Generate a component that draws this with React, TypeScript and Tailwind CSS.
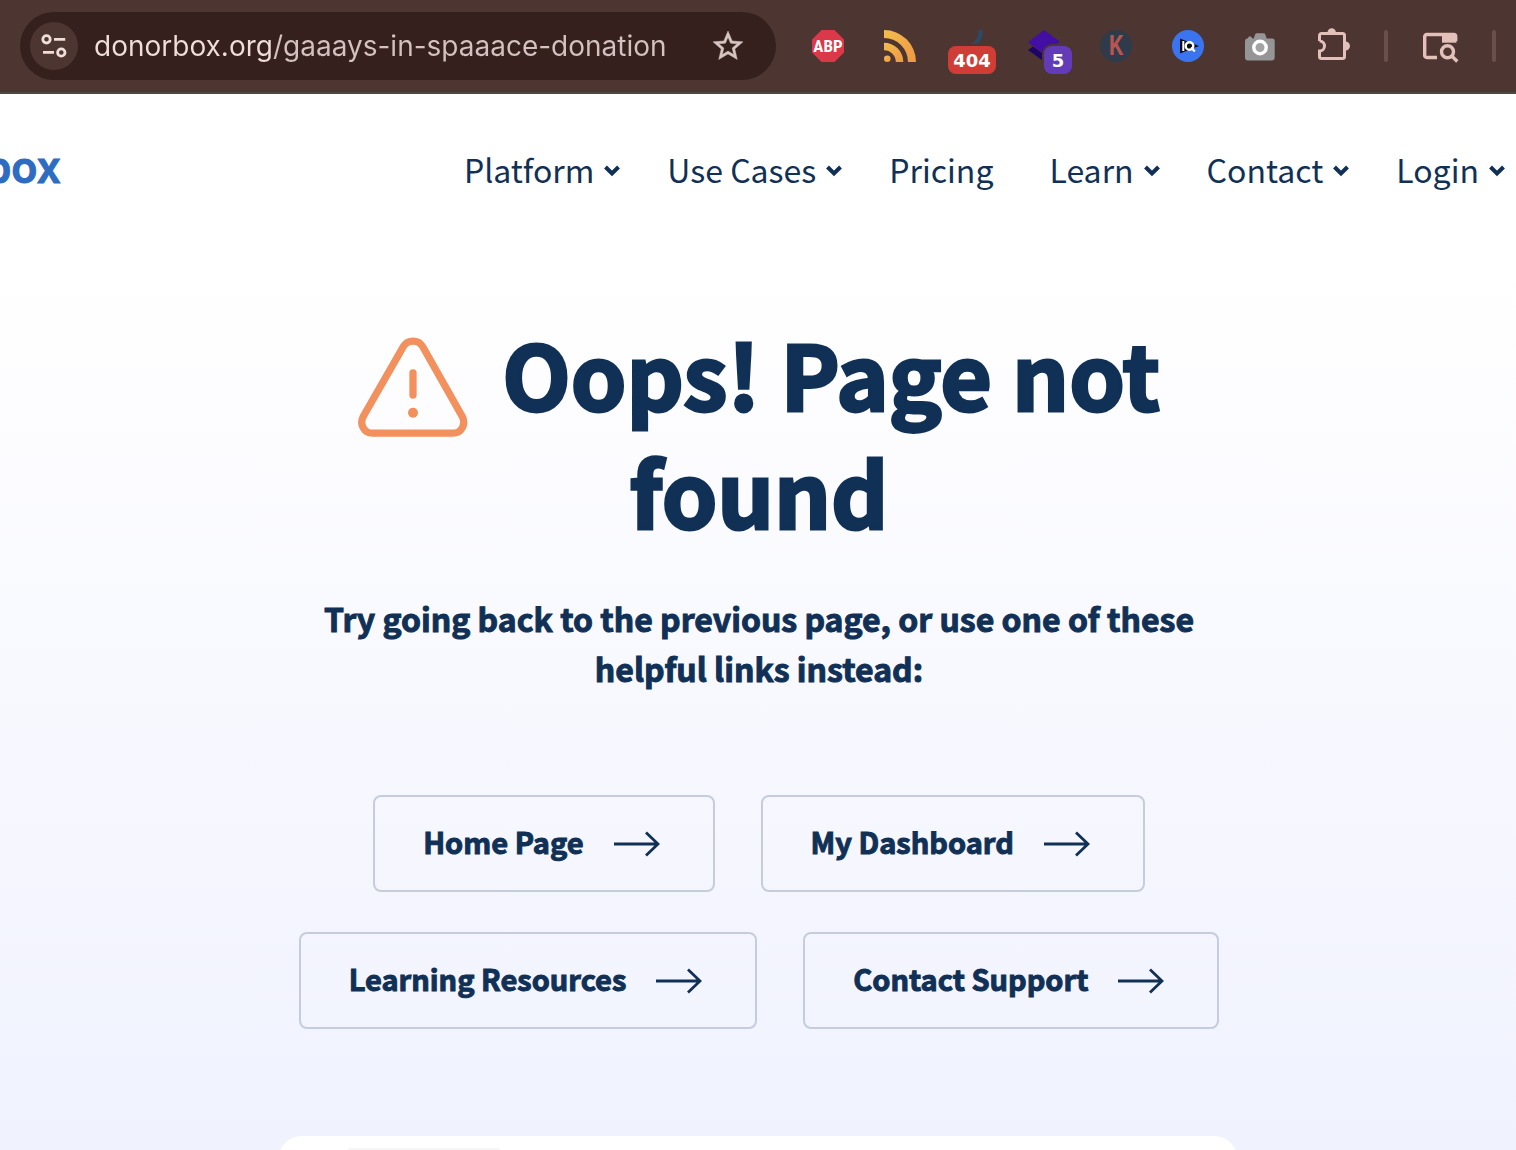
import type { ReactNode } from 'react';

const PAGE_FONT = "font-['Noto_Sans_CJK_SC',sans-serif]";

interface NavItem {
  label: string;
  hasMenu: boolean;
}

const navItems: NavItem[] = [
  { label: 'Platform', hasMenu: true },
  { label: 'Use Cases', hasMenu: true },
  { label: 'Pricing', hasMenu: false },
  { label: 'Learn', hasMenu: true },
  { label: 'Contact', hasMenu: true },
  { label: 'Login', hasMenu: true },
];

const helpfulLinks = ['Home Page', 'My Dashboard', 'Learning Resources', 'Contact Support'];

function TuneIcon() {
  return (
    <svg viewBox="0 0 48 48" className="size-12" fill="none" stroke="#f0dedb" strokeWidth="2.8" aria-hidden="true">
      <circle cx="16.5" cy="17.3" r="3.7" />
      <path d="M24 17.3h11.2M13 30.3h11" />
      <circle cx="31.3" cy="30.5" r="3.7" />
    </svg>
  );
}

function StarIcon() {
  return (
    <svg viewBox="0 0 24 24" className="size-9 overflow-visible" fill="#d6c5c2" stroke="#d6c5c2" strokeWidth="0.3" aria-hidden="true">
      <path d="M22 9.24l-7.19-.62L12 2 9.19 8.63 2 9.24l5.46 4.73L5.82 21 12 17.27 18.18 21l-1.63-7.03L22 9.24zM12 15.4l-3.76 2.27 1-4.28-3.32-2.88 4.38-.38L12 6.1l1.71 4.04 4.38.38-3.32 2.88 1 4.28L12 15.4z" />
    </svg>
  );
}

function AdblockIcon() {
  return (
    <svg viewBox="0 0 32 32" className="size-8" aria-hidden="true">
      <path d="M9.5 0h13L32 9.5v13L22.5 32h-13L0 22.5v-13z" fill="#db3849" />
      <text x="16" y="22" textAnchor="middle" fill="#fff" className="font-['Roboto_Condensed','Noto_Sans_CJK_SC',sans-serif] text-[17px] font-bold">
        ABP
      </text>
    </svg>
  );
}

function RssIcon() {
  return (
    <svg viewBox="0 0 32 32" className="size-8" aria-hidden="true">
      <defs>
        <linearGradient id="rss" x1="0" y1="0" x2="1" y2="1">
          <stop offset="0" stopColor="#f3bd4c" />
          <stop offset="1" stopColor="#ee9746" />
        </linearGradient>
      </defs>
      <g fill="url(#rss)">
        <path d="M0 0a32 32 0 0 1 32 32h-8A24 24 0 0 0 0 8z" />
        <path d="M0 12.7A19.3 19.3 0 0 1 19.3 32h-7.5A11.8 11.8 0 0 0 0 20.2z" />
        <circle cx="3.3" cy="28.7" r="3.3" />
      </g>
    </svg>
  );
}

function RedirectIcon() {
  return (
    <svg viewBox="0 0 32 32" className="size-8" aria-hidden="true">
      <path d="M22.500 0h4c.5 7-1.500 11-6 14h-5.500c5-2.500 7.500-7 7.500-14z" fill="#2c4a68" />
    </svg>
  );
}

function LayersIcon() {
  return (
    <svg viewBox="0 0 32 32" className="size-8" aria-hidden="true">
      <path d="M0 20l5-3.500 11 8v7z" fill="#1e0467" />
      <path d="M16 0l16 11.800L16 24 0 12.200z" fill="#430fa3" />
    </svg>
  );
}

function KIcon() {
  return (
    <svg viewBox="0 0 32 32" className="size-8" aria-hidden="true">
      <circle cx="16" cy="16" r="16" fill="#2f3b4a" />
      <text x="16" y="25" textAnchor="middle" fill="#b9544f" className="font-['Roboto_Condensed','Liberation_Mono',monospace] text-[27px] font-medium">
        K
      </text>
    </svg>
  );
}

function IqIcon() {
  return (
    <svg viewBox="0 0 32 32" className="size-8" aria-hidden="true">
      <circle cx="16" cy="16" r="16" fill="#3b74f0" />
      <path d="M8 8.500l19 7.500-19 7.500z" fill="#0b0d14" />
      <path d="M11.300 11v10" stroke="#fff" strokeWidth="2" />
      <circle cx="17.500" cy="16" r="3.800" fill="#0b0d14" stroke="#fff" strokeWidth="2.400" />
      <path d="M19 17.500l3.800 4" stroke="#fff" strokeWidth="2.200" />
    </svg>
  );
}

function CameraIcon() {
  return (
    <svg viewBox="0 0 32 32" className="size-8" aria-hidden="true">
      <path
        d="M3.500 8.500L5 6.500h2l1.500 2h1.200l1.500-4.200c.3-.7.800-1 1.500-1h7c.7 0 1.200.3 1.500 1l1.500 4.200h5.500a2.500 2.500 0 0 1 2.500 2.500v16.500a3 3 0 0 1-3 3H4a3 3 0 0 1-3-3V11a2.500 2.500 0 0 1 2.500-2.500z"
        fill="#969696"
      />
      <circle cx="16" cy="17.500" r="6.200" fill="#a3a3a3" stroke="#fff" strokeWidth="3.400" />
    </svg>
  );
}

function PuzzleIcon() {
  return (
    <svg viewBox="0 0 32 32" className="size-8 overflow-visible" fill="#e3c0ba" aria-hidden="true">
      <path
        d="M3.500 11V5.500a2 2 0 0 1 2-2h21a2 2 0 0 1 2 2v21a2 2 0 0 1-2 2h-21a2 2 0 0 1-2-2V21c3 0 5-2.300 5-5s-2-5-5-5"
        fill="none"
        stroke="#e3c0ba"
        strokeWidth="3"
      />
      <path d="M11.500 2.500a4.200 4.200 0 0 1 8.400 0zM29.500 11.500a4.500 4.500 0 0 1 0 9z" />
    </svg>
  );
}

function TabSearchIcon() {
  return (
    <svg viewBox="0 0 32 32" className="size-8 overflow-visible" fill="none" stroke="#e3c0ba" strokeWidth="3.4" aria-hidden="true">
      <path d="M13 27.500H2.700a2 2 0 0 1-2-2V6.500a2 2 0 0 1 2-2h27a2 2 0 0 1 2 2V11" />
      <path d="M18 4h14.500v8.700H18z" fill="#e3c0ba" stroke="none" />
      <circle cx="23.500" cy="21.700" r="6" />
      <path d="M28 26.200l5.300 5.300" />
    </svg>
  );
}

function Chevron() {
  return (
    <svg viewBox="0 0 16 12" className="h-3 w-4" fill="none" stroke="#113056" strokeWidth="4" aria-hidden="true">
      <path d="M1.500 2L8 8.500 14.500 2" />
    </svg>
  );
}

function WarningIcon() {
  return (
    <svg viewBox="0 0 110 100" className="mr-[34px] -mb-2 inline-block h-[100px] w-[110px] align-[-18px]" fill="none" stroke="#f2915d" strokeWidth="7.3" aria-hidden="true">
      <path d="M45.500 9.300C49.500 2.300 60.500 2.300 64.500 9.300L104 79c4.500 8-.5 17.200-9 17.200H14.500c-8.500 0-13.500-9.200-9-17.200z" />
      <path d="M55 36v22" strokeLinecap="round" />
      <circle cx="55" cy="75.700" r="5" fill="#f2915d" stroke="none" />
    </svg>
  );
}

function ArrowIcon() {
  return (
    <svg viewBox="0 0 46 26" className="h-[26px] w-[46px]" fill="none" stroke="#113056" strokeWidth="2.8" aria-hidden="true">
      <path d="M0 13h44M32 1.500L44 13 32 24.500" />
    </svg>
  );
}

function Extension({ label, badge, badgeClass, children }: {
  label: string;
  badge?: string;
  badgeClass?: string;
  children: ReactNode;
}) {
  return (
    <button type="button" aria-label={label} className="relative size-8 shrink-0">
      {children}
      {badge && (
        <span className={`absolute top-4 flex h-7 items-center justify-center rounded-lg font-['DejaVu_Sans',sans-serif] text-[18px] font-bold text-white ${badgeClass}`}>
          {badge}
        </span>
      )}
    </button>
  );
}

function BrowserToolbar() {
  return (
    <div className="flex h-[94px] shrink-0 items-center gap-9 border-b-2 border-[#514643] bg-[#4d3531] px-5">
      <div className="flex h-[68px] min-w-0 flex-1 items-center rounded-full bg-[#35201e] pr-[30px] pl-[10px]">
        <button type="button" aria-label="View site information" className="mr-4 size-12 shrink-0 rounded-full bg-[#4d3531]">
          <TuneIcon />
        </button>
        <input
          type="text"
          aria-label="Address and search bar"
          defaultValue="donorbox.org/gaaays-in-spaaace-donation"
          className="min-w-0 flex-1 bg-linear-to-r from-[#f0dedb] from-[178px] to-[#d3c2bf] to-[178px] bg-clip-text font-['Inter',sans-serif] text-[28px] text-transparent outline-none"
        />
        <button type="button" aria-label="Bookmark this tab" className="shrink-0">
          <StarIcon />
        </button>
      </div>
      <div className="flex shrink-0 gap-10">
        <Extension label="Adblock Plus"><AdblockIcon /></Extension>
        <Extension label="RSS feed"><RssIcon /></Extension>
        <Extension label="Redirect path" badge="404" badgeClass="-left-2 w-12 bg-[#d03d36]"><RedirectIcon /></Extension>
        <Extension label="Layers" badge="5" badgeClass="left-4 w-7 bg-[#633bb8] ring-2 ring-[#4d3531]"><LayersIcon /></Extension>
        <Extension label="Keywords"><KIcon /></Extension>
        <Extension label="IQ"><IqIcon /></Extension>
        <Extension label="Screenshot"><CameraIcon /></Extension>
        <Extension label="Extensions"><PuzzleIcon /></Extension>
      </div>
      <div className="h-8 w-1 shrink-0 rounded-full bg-[#6b4f4b]" />
      <button type="button" aria-label="Search tabs" className="size-8 shrink-0">
        <TabSearchIcon />
      </button>
      <div className="h-8 w-1 shrink-0 rounded-full bg-[#6b4f4b]" />
    </div>
  );
}

function SiteHeader() {
  return (
    <header className="flex h-[154px] shrink-0 items-center justify-between pr-[11px]">
      <a
        href="#"
        aria-label="Donorbox home"
        className="flex w-[61px] justify-end overflow-hidden pb-2 font-['Inter',sans-serif] text-[43px] leading-[60px] font-semibold text-[#2d6cc0] [-webkit-text-stroke:1px_#2d6cc0]"
      >
        box
      </a>
      <nav className="flex items-center gap-[47px] text-[32px] leading-[48px]">
        {navItems.map((item) =>
          item.hasMenu ? (
            <button key={item.label} type="button" className="flex items-center gap-[10px]">
              <span className="pb-1">{item.label}</span>
              <Chevron />
            </button>
          ) : (
            <a key={item.label} href="#" className="pr-[9px] pb-1">
              {item.label}
            </a>
          )
        )}
      </nav>
    </header>
  );
}

export default function App() {
  return (
    <div className={`flex h-screen flex-col overflow-hidden bg-white text-[#113056] ${PAGE_FONT}`}>
      <BrowserToolbar />
      <div className="flex min-h-0 flex-1 flex-col bg-linear-to-b from-white from-15% to-[#f0f2fe]">
        <SiteHeader />
        <main className="mx-auto flex w-full max-w-[960px] flex-1 flex-col pt-[66px] text-center">
          <h1 className="pl-[2px] text-[89px] leading-[118px] font-bold [-webkit-text-stroke:3px_#113056]">
            <WarningIcon />
            Oops! Page not found
          </h1>
          <p className="mt-[43px] pl-[2px] text-[32px] leading-[50px] font-bold [-webkit-text-stroke:1px_#113056]">
            Try going back to the previous page, or use one of these helpful links instead:
          </p>
          <div className="mt-[102px] flex flex-wrap justify-center gap-x-[46px] gap-y-10 pl-[2px]">
            {helpfulLinks.map((label) => (
              <a
                key={label}
                href="#"
                className="flex h-[97px] items-center gap-[30px] rounded-lg border-2 border-[#c5cddc] pr-[53px] pl-12 text-[29px] font-bold [-webkit-text-stroke:1px_#113056]"
              >
                <span className="pb-1">{label}</span>
                <ArrowIcon />
              </a>
            ))}
          </div>
          <div className="mt-[107px] flex-1 rounded-t-[24px] bg-white pt-3 pl-[69px]">
            <div className="h-12 w-[154px] rounded-t bg-[#f6f6f6]" />
          </div>
        </main>
      </div>
    </div>
  );
}
